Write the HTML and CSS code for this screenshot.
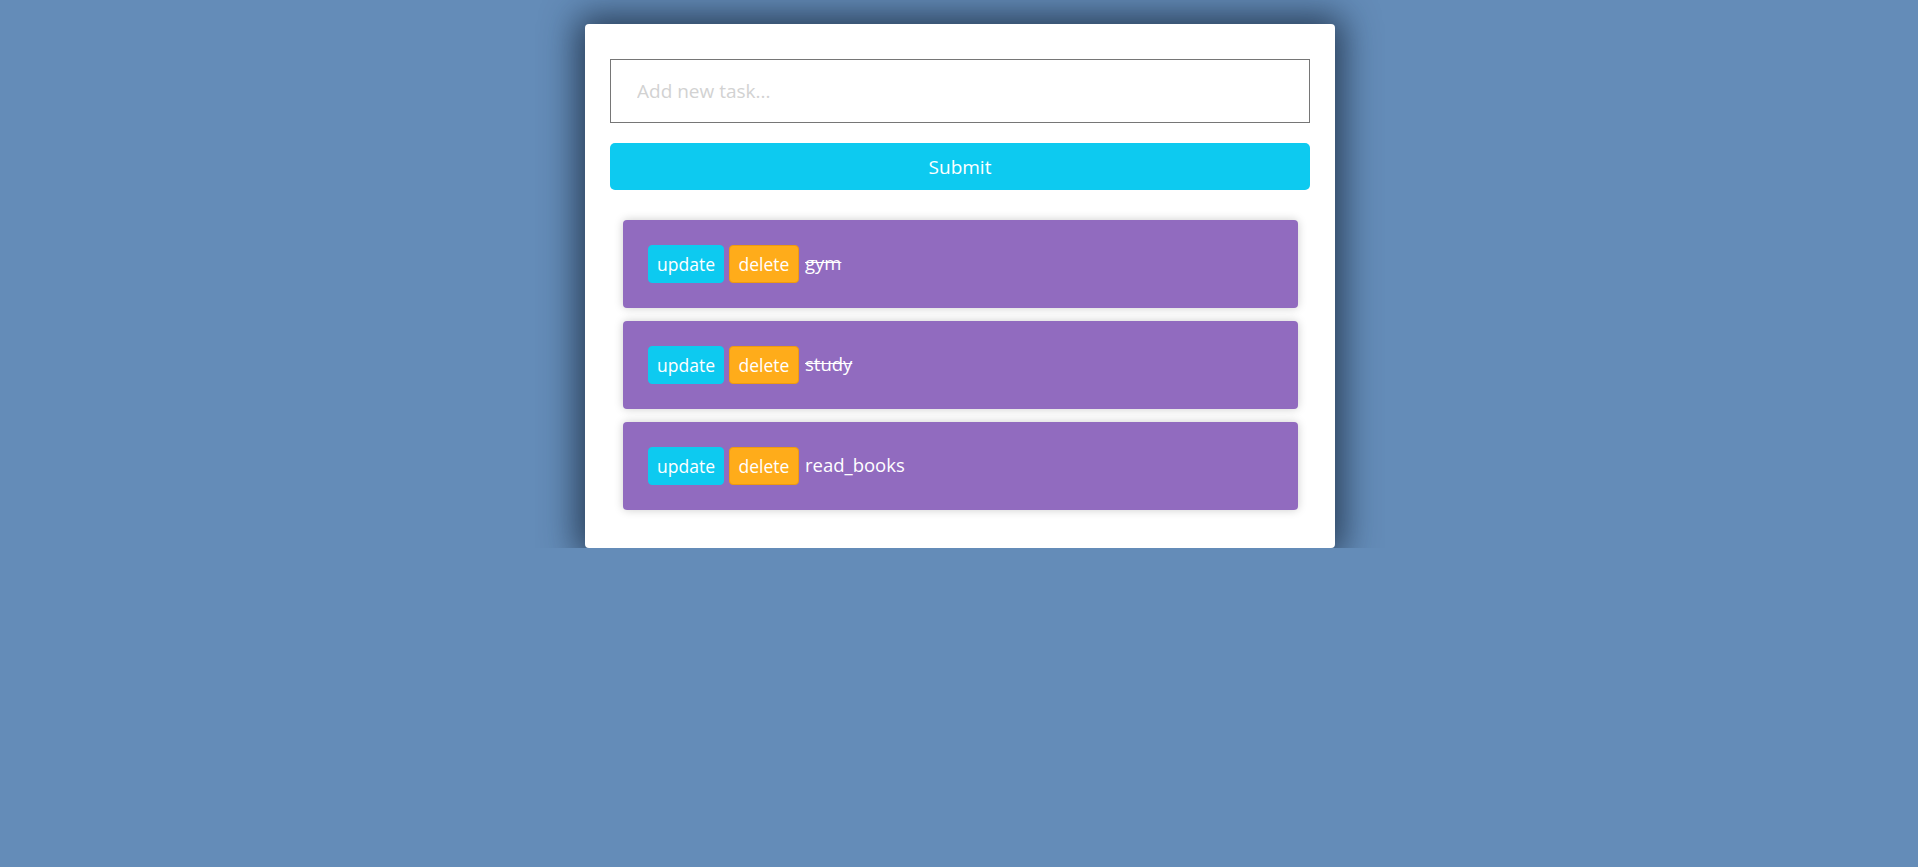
FILE: index.html
```html
<!DOCTYPE html>
<html>
<head>
<meta charset="utf-8">
<link rel="stylesheet" href="styles.css">
</head>
<body>
<div class="page">
  <div class="card">
    <form class="form">
      <input class="task-input" type="text" placeholder="Add new task...">
      <button class="submit" type="button">Submit</button>
    </form>
    <ul class="list">
      <li class="item">
        <button class="btn btn-update">update</button>
        <button class="btn btn-delete">delete</button>
        <span class="task done">gym</span>
      </li>
      <li class="item">
        <button class="btn btn-update">update</button>
        <button class="btn btn-delete">delete</button>
        <span class="task done">study</span>
      </li>
      <li class="item">
        <button class="btn btn-update">update</button>
        <button class="btn btn-delete">delete</button>
        <span class="task">read_books</span>
      </li>
    </ul>
  </div>
</div>
</body>
</html>
```

FILE: styles.css
```css
* { box-sizing: border-box; }
html, body {
  margin: 0;
  padding: 0;
  background: #648cb8;
  font-family: "Open Sans", "Noto Sans", sans-serif;
}
.page {
  display: flex;
  justify-content: center;
  padding-top: 24px;
  padding-left: 2px;
}
.card {
  width: 750px;
  background: #fff;
  border-radius: 4px;
  padding: 35px 25px 38px;
  box-shadow: 0 0 35px 8px rgba(20, 35, 55, 0.75);
}
.form {
  display: flex;
  flex-direction: column;
  gap: 20px;
  margin: 0;
}
.task-input {
  height: 64px;
  border: 1px solid #767676;
  border-radius: 0;
  padding: 0 26px;
  font-family: inherit;
  font-size: 19px;
  color: #333;
  outline: none;
}
.task-input::placeholder { color: #d2d2d2; }
.submit {
  height: 47px;
  border: none;
  border-radius: 5px;
  background: #0dcaf0;
  color: #fff;
  font-family: inherit;
  font-size: 19px;
}
.list {
  list-style: none;
  margin: 30px 0 0;
  padding: 0 12px 0 13px;
  display: flex;
  flex-direction: column;
  gap: 13px;
}
.item {
  height: 88px;
  background: #916bbf;
  border-radius: 4px;
  padding: 0 25px;
  display: flex;
  align-items: center;
  box-shadow: 0 0 10px rgba(0, 0, 0, 0.2);
}
.btn {
  height: 38px;
  border-radius: 4px;
  color: #fff;
  font-family: inherit;
  font-size: 17.5px;
  padding: 0 4px;
  margin-right: 5px;
}
.btn-update {
  background: #0dcaf0;
  border: 1px solid #0dcaf0;
  width: 76px;
}
.btn-delete {
  background: #ffac1a;
  border: 1px solid #ee9a10;
  width: 70px;
  margin-right: 6px;
}
.task {
  color: #fff;
  font-size: 18.5px;
  margin-top: -4px;
}
.task.done { text-decoration: line-through; }
```
